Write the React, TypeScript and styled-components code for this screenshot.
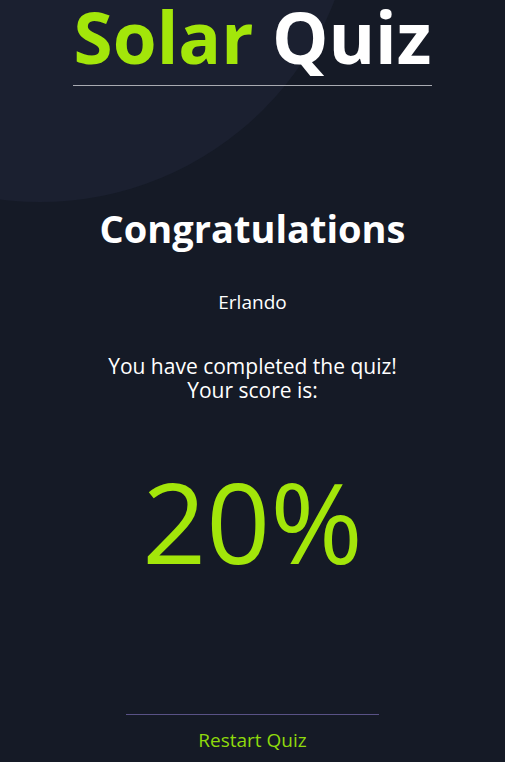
import React from "react";
import styled, { createGlobalStyle } from "styled-components";

const Global = createGlobalStyle`
  html, body { margin: 0; padding: 0; background: #151a26; }
  body { font-family: "Open Sans", "Noto Sans", sans-serif; color: #ffffff; }
`;

const Page = styled.div`
  position: relative;
  width: 505px;
  height: 762px;
  overflow: hidden;
  background: #151a26;
`;

const Glow = styled.div`
  position: absolute;
  left: -276px;
  top: -430px;
  width: 632px;
  height: 632px;
  border-radius: 50%;
  background: #1b2030;
`;

const Column = styled.div`
  position: relative;
  display: flex;
  flex-direction: column;
  align-items: center;
  text-align: center;
`;

const Header = styled.header`
  width: 359px;
  padding-bottom: 11px;
  border-bottom: 1px solid #a9abb2;
  display: flex;
  justify-content: center;
`;

const Title = styled.h1`
  margin: 0;
  font-size: 71px;
  font-weight: 700;
  line-height: 74px;
  color: #ffffff;
  white-space: nowrap;
`;

const Accent = styled.span`
  color: #a3e60a;
`;

const Heading = styled.h2`
  margin: 118px 0 0;
  font-size: 38px;
  font-weight: 700;
  line-height: 48px;
`;

const Name = styled.p`
  margin: 38px 0 0;
  font-size: 19px;
  line-height: 24px;
`;

const Message = styled.p`
  margin: 40px 0 0;
  font-size: 21px;
  line-height: 24px;
`;

const Score = styled.div`
  margin: 49px 0 0;
  font-size: 112px;
  font-weight: 400;
  line-height: 140px;
  color: #a3e60a;
`;

const Footer = styled.div`
  margin-top: 123px;
  width: 253px;
  border-top: 1px solid #595286;
  display: flex;
  justify-content: center;
`;

const Restart = styled.button`
  margin-top: 12px;
  background: none;
  border: none;
  padding: 0;
  font-family: inherit;
  font-size: 19px;
  line-height: 26px;
  color: #8fd90c;
  cursor: pointer;
`;

export default function App() {
  return (
    <Page>
      <Global />
      <Glow />
      <Column>
        <Header>
          <Title>
            <Accent>Solar</Accent> Quiz
          </Title>
        </Header>
        <Heading>Congratulations</Heading>
        <Name>Erlando</Name>
        <Message>
          You have completed the quiz!
          <br />
          Your score is:
        </Message>
        <Score>20%</Score>
        <Footer>
          <Restart>Restart Quiz</Restart>
        </Footer>
      </Column>
    </Page>
  );
}
